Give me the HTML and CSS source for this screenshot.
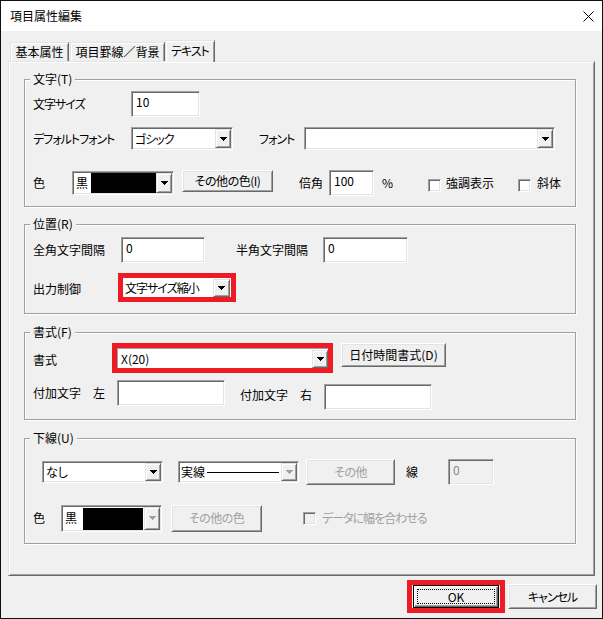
FILE: index.html
```html
<!DOCTYPE html>
<html lang="ja">
<head>
<meta charset="utf-8">
<title>項目属性編集</title>
<link rel="stylesheet" href="styles.css">
</head>
<body>
<div class="window">
  <div class="titlebar">
    <span class="title">項目属性編集</span>
    <svg class="close" width="11" height="11" viewBox="0 0 11 11"><path d="M0.5 0.5L10.5 10.5M10.5 0.5L0.5 10.5" stroke="#000" stroke-width="1" fill="none"/></svg>
  </div>
  <div class="client">
    <div class="tabs">
      <div class="tab tab-basic">基本属性</div>
      <div class="tab tab-border">項目罫線／背景</div>
      <div class="tab tab-text selected kana">テキスト</div>
    </div>
    <div class="panel">
      <section class="group g-char">
        <div class="legend">文字(T)</div>
        <div class="row r-size">
          <span class="lbl w-98 kana">文字サイズ</span>
          <div class="edit w-69">10</div>
        </div>
        <div class="row r-font">
          <span class="lbl w-98 kana">デフォルトフォント</span>
          <div class="combo w-102 h-23"><span class="val kana">ゴシック</span><span class="dd"><svg class="arr" width="7" height="4" viewBox="0 0 7 4"><path d="M0 0h7v1h-7zM1 1h5v1h-5zM2 2h3v1h-3zM3 3h1v1h-1z"/></svg></span></div>
          <span class="lbl ml-26 w-45 kana">フォント</span>
          <div class="combo w-251 h-23"><span class="val"></span><span class="dd"><svg class="arr" width="7" height="4" viewBox="0 0 7 4"><path d="M0 0h7v1h-7zM1 1h5v1h-5zM2 2h3v1h-3zM3 3h1v1h-1z"/></svg></span></div>
        </div>
        <div class="row r-color">
          <span class="lbl w-39">色</span>
          <div class="combo w-102 h-24"><span class="swname">黒</span><span class="swatch"></span><span class="dd"><svg class="arr" width="7" height="4" viewBox="0 0 7 4"><path d="M0 0h7v1h-7zM1 1h5v1h-5zM2 2h3v1h-3zM3 3h1v1h-1z"/></svg></span></div>
          <div class="btn ml-8 w-91 h-22 lift-4 kana-s">その他の色(I)</div>
          <span class="lbl ml-26 w-30">倍角</span>
          <div class="edit w-45">100</div>
          <span class="lbl ml-8 w-46">%</span>
          <span class="check drop-4"></span>
          <span class="lbl ml-5 w-72">強調表示</span>
          <span class="check drop-4"></span>
          <span class="lbl ml-6">斜体</span>
        </div>
      </section>

      <section class="group g-pos">
        <div class="legend">位置(R)</div>
        <div class="row r-pos1">
          <span class="lbl w-88">全角文字間隔</span>
          <div class="edit w-84">0</div>
          <span class="lbl ml-31 w-87">半角文字間隔</span>
          <div class="edit w-85">0</div>
        </div>
        <div class="row r-pos2">
          <span class="lbl w-85 down-3">出力制御</span>
          <div class="hl w-118">
            <div class="bare"><span class="val kana">文字サイズ縮小</span><span class="dd"><svg class="arr" width="7" height="4" viewBox="0 0 7 4"><path d="M0 0h7v1h-7zM1 1h5v1h-5zM2 2h3v1h-3zM3 3h1v1h-1z"/></svg></span></div>
          </div>
        </div>
      </section>

      <section class="group g-fmt">
        <div class="legend">書式(F)</div>
        <div class="row top r-fmt1">
          <span class="lbl w-79 mt-9">書式</span>
          <div class="hl w-221 h-30">
            <div class="bare fmt"><span class="val">X(20)</span><span class="dd"><svg class="arr" width="7" height="4" viewBox="0 0 7 4"><path d="M0 0h7v1h-7zM1 1h5v1h-5zM2 2h3v1h-3zM3 3h1v1h-1z"/></svg></span></div>
          </div>
          <div class="btn ml-8 w-105 h-24">日付時間書式(D)</div>
        </div>
        <div class="row top r-fmt2">
          <span class="lbl w-84 mt-5 nopalt">付加文字　左</span>
          <div class="edit w-108"></div>
          <span class="lbl ml-15 w-84 mt-7 nopalt">付加文字　右</span>
          <div class="edit w-108 mt-4"></div>
        </div>
      </section>

      <section class="group g-ul">
        <div class="legend">下線(U)</div>
        <div class="row r-ul1">
          <div class="combo ml-9 w-121 h-22"><span class="val">なし</span><span class="dd"><svg class="arr" width="7" height="4" viewBox="0 0 7 4"><path d="M0 0h7v1h-7zM1 1h5v1h-5zM2 2h3v1h-3zM3 3h1v1h-1z"/></svg></span></div>
          <div class="combo ml-15 w-121 h-22"><span class="linename">実線</span><span class="lineval"><span class="rule"></span></span><span class="dd"><svg class="arr off" width="7" height="4" viewBox="0 0 7 4"><path d="M0 0h7v1h-7zM1 1h5v1h-5zM2 2h3v1h-3zM3 3h1v1h-1z"/></svg></span></div>
          <div class="btn off ml-7 w-89 h-26 kana-s">その他</div>
          <span class="lbl ml-11 w-42">線</span>
          <div class="edit off w-46">0</div>
        </div>
        <div class="row r-ul2">
          <span class="lbl w-28">色</span>
          <div class="combo w-101 h-27"><span class="swname">黒</span><span class="swatch narrow"></span><span class="dd"><svg class="arr off" width="7" height="4" viewBox="0 0 7 4"><path d="M0 0h7v1h-7zM1 1h5v1h-5zM2 2h3v1h-3zM3 3h1v1h-1z"/></svg></span></div>
          <div class="btn off ml-9 w-91 h-27 kana-s">その他の色</div>
          <span class="check off ml-41"></span>
          <span class="lbl ml-6 dim kana">データに幅を合わせる</span>
        </div>
      </section>
    </div>
    <div class="bottom">
      <div class="hl okbox"><div class="btn default">OK</div></div>
      <div class="btn ml-3 w-89 h-25 kana">キャンセル</div>
    </div>
  </div>
</div>
</body>
</html>
```

FILE: styles.css
```css
* { box-sizing: border-box; }
html, body { margin: 0; padding: 0; }
body {
  width: 603px;
  height: 619px;
  overflow: hidden;
  background: #f0f0f0;
  color: #000;
  font-family: "Noto Sans CJK JP", "Noto Sans", sans-serif;
  font-size: 12px;
  line-height: 16px;
  font-feature-settings: "palt";
}
.window {
  width: 603px;
  height: 619px;
  border: 1px solid #101010;
  background: #f0f0f0;
  display: flex;
  flex-direction: column;
}
.titlebar {
  flex: none;
  height: 30px;
  background: #fff;
  display: flex;
  align-items: center;
  justify-content: space-between;
  padding: 0 8px 0 9px;
}
.close { display: block; }
.client {
  flex: 1;
  padding-top: 9px;
  display: flex;
  flex-direction: column;
}

/* tabs */
.tabs {
  display: flex;
  align-items: flex-end;
  height: 21px;
  margin-left: 9px;
}
.tab {
  height: 19px;
  border: 1px solid #e3e3e3;
  border-right-color: #696969;
  border-bottom: none;
  box-shadow: inset 1px 1px 0 #fff, inset -1px 0 0 #a0a0a0;
  display: flex;
  align-items: center;
  justify-content: center;
  white-space: nowrap;
}
.tab-basic { width: 59px; margin-right: 1px; }
.tab-border { width: 95px; font-feature-settings: normal; }
.tab-text { width: 50px; }
.tab.selected {
  height: 22px;
  margin-bottom: -1px;
  padding-bottom: 2px;
  background: #f0f0f0;
  position: relative;
  z-index: 1;
}

/* panel */
.panel {
  flex: none;
  margin-left: 7px;
  width: 587px;
  height: 515px;
  border: 1px solid;
  border-color: #e3e3e3 #696969 #696969 #e3e3e3;
  box-shadow: inset 1px 1px 0 #fff, inset -1px -1px 0 #a0a0a0;
  padding: 17px 0 0 15px;
}

/* group boxes */
.group {
  width: 552px;
  border: 1px solid #a0a0a0;
  box-shadow: inset 1px 1px 0 #fff, 1px 1px 0 #fff;
  padding: 0 0 0 8px;
}
.g-char { height: 128px; margin-bottom: 17px; }
.g-pos { height: 90px; margin-bottom: 18px; }
.g-fmt { height: 88px; margin-bottom: 18px; }
.g-ul { height: 106px; }
.legend {
  width: fit-content;
  height: 14px;
  line-height: 14px;
  margin: -8px 0 -6px -3px;
  padding: 0 3px;
  background: #f0f0f0;
}

/* rows */
.row { display: flex; align-items: center; }
.row.top { align-items: flex-start; }
.r-size { margin-top: 11px; height: 26px; }
.r-font { margin-top: 10px; height: 23px; }
.r-color { margin-top: 20px; height: 26px; }
.r-pos1 { margin-top: 12px; height: 26px; }
.r-pos2 { margin-top: 10px; height: 29px; }
.r-fmt1 { margin-top: 10px; height: 30px; }
.r-fmt2 { margin-top: 7px; height: 30px; }
.r-ul1 { margin-top: 20px; height: 26px; }
.r-ul2 { margin-top: 19px; height: 28px; }

.lbl { flex: none; white-space: nowrap; }
.nopalt { font-feature-settings: normal; }
.kana { letter-spacing: -1px; }
.kana-s { letter-spacing: -0.5px; }
.dim { color: #a0a0a0; }

/* sunken edit */
.edit {
  flex: none;
  height: 26px;
  background: #fff;
  border: 1px solid;
  border-color: #a0a0a0 #fff #fff #a0a0a0;
  box-shadow: inset 1px 1px 0 #696969, inset -1px -1px 0 #e3e3e3;
  padding: 2px 4px;
}
.edit.off { background: #f0f0f0; color: #8a8a8a; }

/* combo boxes */
.combo {
  flex: none;
  display: flex;
  background: #fff;
  border: 1px solid;
  border-color: #a0a0a0 #fff #fff #a0a0a0;
  box-shadow: inset 1px 1px 0 #696969, inset -1px -1px 0 #e3e3e3;
  padding: 1px;
}
.val {
  flex: 1;
  display: flex;
  align-items: center;
  padding-left: 2px;
  white-space: nowrap;
}
.dd {
  flex: none;
  width: 16px;
  background: #f0f0f0;
  border: 1px solid;
  border-color: #e3e3e3 #696969 #696969 #e3e3e3;
  box-shadow: inset 1px 1px 0 #fff, inset -1px -1px 0 #a0a0a0;
  display: flex;
  align-items: center;
  justify-content: center;
  letter-spacing: 0;
}
.arr { display: block; fill: #000; }
.arr.off { fill: #a0a0a0; }
.swname {
  flex: none;
  width: 17px;
  display: flex;
  align-items: center;
  padding-left: 2px;
  background: #fff;
}
.swatch { flex: 1; background: #000; }
.swatch.narrow { margin: 1px 1px 0 3px; }
.linename {
  flex: none;
  display: flex;
  align-items: center;
  padding-left: 1px;
}
.lineval {
  flex: 1;
  display: flex;
  align-items: center;
  padding: 0 2px 0 2px;
}
.rule { flex: 1; height: 1px; background: #000; }

/* highlighted (red) frames */
.hl {
  flex: none;
  border: 5px solid #ed1c24;
  display: flex;
}
.r-pos2 .hl { height: 29px; }
.bare {
  flex: 1;
  display: flex;
  background: #fff;
}
.bare .dd { margin: 1px 1px 0 0; width: 17px; }
.bare.fmt { border-top: 1px solid #a0a0a0; border-left: 1px solid #a0a0a0; }
.bare.fmt .val { padding-left: 3px; }
.bare.fmt .dd { margin: 1px 0 0 0; width: 16px; }

/* raised buttons */
.btn {
  flex: none;
  background: #f0f0f0;
  border: 1px solid;
  border-color: #fff #696969 #696969 #fff;
  box-shadow: inset 1px 1px 0 #e3e3e3, inset -1px -1px 0 #a0a0a0;
  display: flex;
  align-items: center;
  justify-content: center;
  white-space: nowrap;
}
.btn.off { color: #a0a0a0; }
.btn.default {
  width: 86px;
  height: 23px;
  border: 1px solid #000;
  box-shadow: inset 1px 1px 0 #fff, inset -1px -1px 0 #696969, inset -2px -2px 0 #a0a0a0;
  outline: 1px dotted #000;
  outline-offset: -5px;
}
.okbox { padding: 0 1px; }

/* check boxes */
.check {
  flex: none;
  width: 13px;
  height: 13px;
  background: #fff;
  border: 1px solid;
  border-color: #a0a0a0 #fff #fff #a0a0a0;
  box-shadow: inset 1px 1px 0 #696969, inset -1px -1px 0 #e3e3e3;
}
.check.off { background: #f0f0f0; }

/* bottom buttons */
.bottom {
  display: flex;
  justify-content: flex-end;
  align-items: center;
  margin-top: 4px;
  padding-right: 5px;
}

/* sizes and spacing */
.w-28 { width: 28px; } .w-30 { width: 30px; } .w-39 { width: 39px; }
.w-42 { width: 42px; } .w-45 { width: 45px; } .w-46 { width: 46px; }
.w-69 { width: 69px; } .w-72 { width: 72px; } .w-79 { width: 79px; }
.w-84 { width: 84px; } .w-85 { width: 85px; } .w-87 { width: 87px; }
.w-88 { width: 88px; } .w-89 { width: 89px; } .w-91 { width: 91px; }
.w-98 { width: 98px; } .w-101 { width: 101px; } .w-102 { width: 102px; }
.w-105 { width: 105px; } .w-108 { width: 108px; } .w-118 { width: 118px; }
.w-121 { width: 121px; } .w-221 { width: 221px; } .w-251 { width: 251px; }
.h-22 { height: 22px; } .h-23 { height: 23px; } .h-24 { height: 24px; }
.h-25 { height: 25px; } .h-26 { height: 26px; } .h-27 { height: 27px; }
.h-30 { height: 30px; }
.ml-3 { margin-left: 3px; } .ml-5 { margin-left: 5px; } .ml-6 { margin-left: 6px; }
.ml-7 { margin-left: 7px; } .ml-8 { margin-left: 8px; } .ml-9 { margin-left: 9px; }
.ml-11 { margin-left: 11px; } .ml-15 { margin-left: 15px; } .ml-26 { margin-left: 26px; }
.ml-31 { margin-left: 31px; } .ml-41 { margin-left: 41px; }
.mt-4 { margin-top: 4px; } .mt-5 { margin-top: 5px; } .mt-7 { margin-top: 7px; } .mt-9 { margin-top: 9px; }
.lift-4 { margin-bottom: 4px; }
.drop-4 { margin-top: 4px; }
.down-3 { padding-top: 3px; }
```
